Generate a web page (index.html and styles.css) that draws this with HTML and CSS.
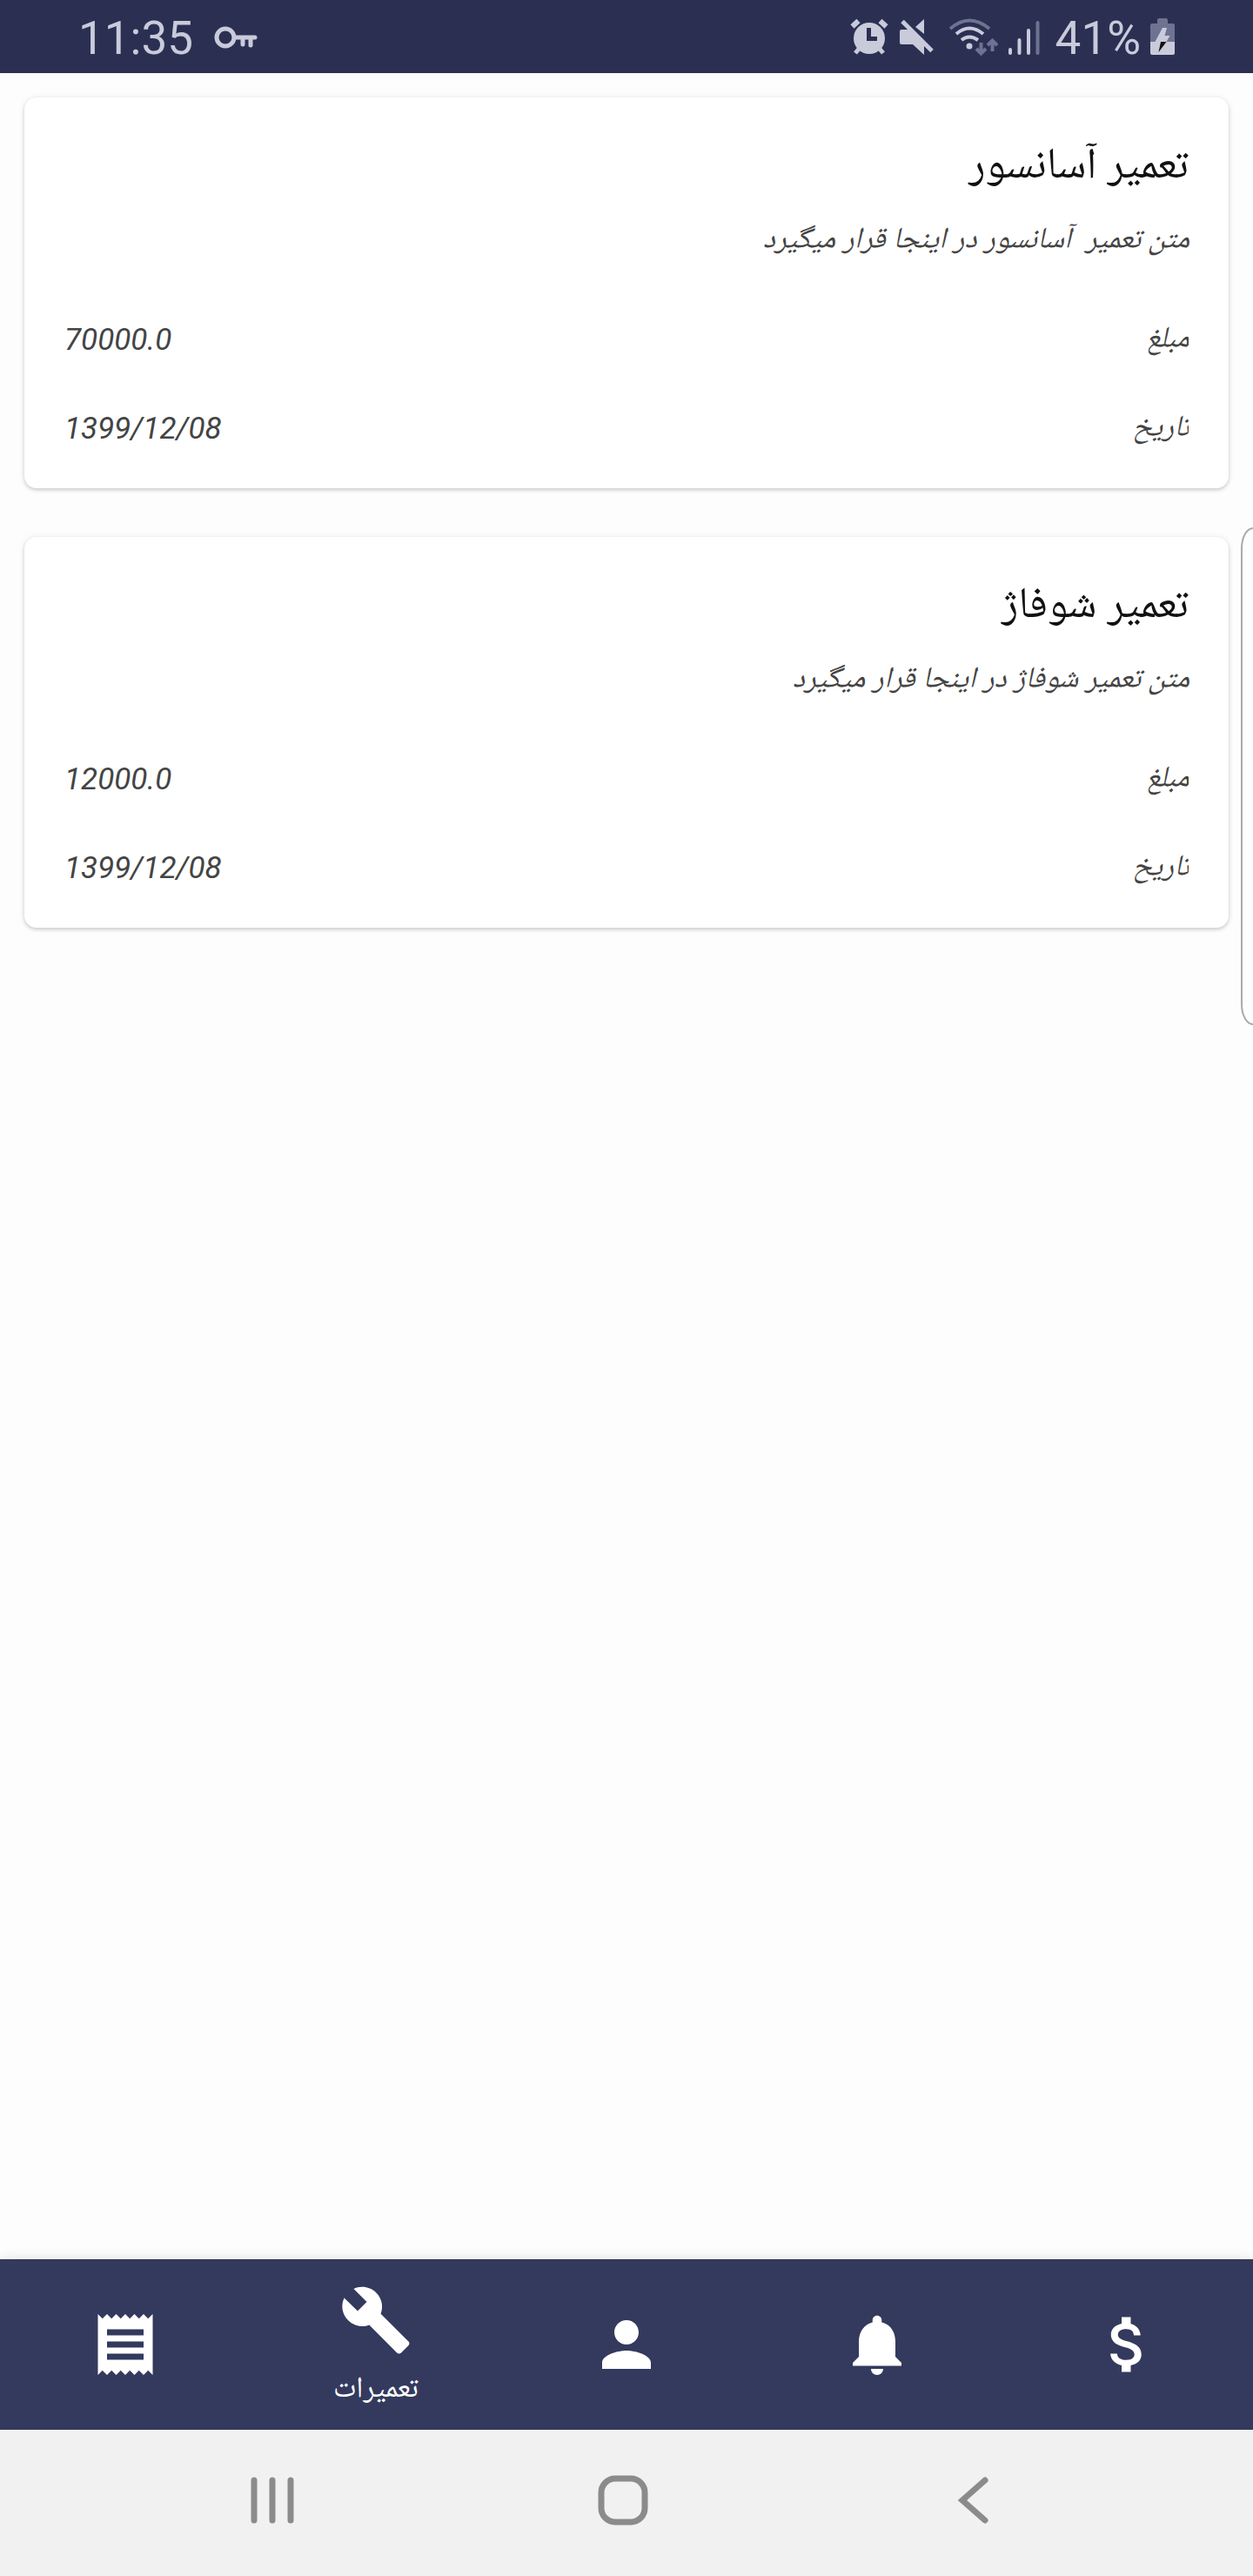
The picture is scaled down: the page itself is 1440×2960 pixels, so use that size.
FILE: index.html
```html
<!DOCTYPE html>
<html lang="fa" dir="rtl">
<head>
<meta charset="utf-8">
<meta name="viewport" content="width=device-width, initial-scale=1">
<title>تعمیرات</title>
<link rel="stylesheet" href="styles.css">
</head>
<body>
<header class="status" dir="ltr">
  <div class="status-group">
    <span class="status-text">11:35</span>
    <svg class="status-icon" width="50" height="84" viewBox="246 0 50 84" aria-hidden="true">
      <circle cx="259" cy="43" r="10" fill="none" stroke="#c9cbdb" stroke-width="5"/>
      <path d="M270 43h23M279 44v7M288 44v8" fill="none" stroke="#c9cbdb" stroke-width="5" stroke-linecap="round"/>
    </svg>
  </div>
  <div class="status-group status-end">
    <svg class="status-icon" width="46" height="84" viewBox="976 0 46 84" aria-hidden="true">
      <circle cx="999" cy="44" r="18"/>
      <path d="M979.500 30.500l7-6.500M1018.500 30.500l-7-6.500" fill="none" stroke="#c9cbdb" stroke-width="6"/>
      <path d="M983 61l5-6M1015 61l-5-6" fill="none" stroke="#c9cbdb" stroke-width="5"/>
      <path d="M998.500 32v12.500h9.500" fill="none" stroke="#2b3053" stroke-width="5"/>
    </svg>
    <svg class="status-icon" width="40" height="84" viewBox="1032 0 40 84" aria-hidden="true">
      <path d="M1035 34h8l18 18v11l-13-12h-13q-2 0-2-2v-13q0-2 2-2z"/>
      <path d="M1051 31l10-9v17z"/>
      <path d="M1036 24.500l34 34" fill="none" stroke="#c9cbdb" stroke-width="5"/>
    </svg>
    <svg class="status-icon wifi" width="58" height="84" viewBox="1088 0 58 84" aria-hidden="true">
      <circle cx="1113" cy="53" r="3.500"/>
      <path d="M1104 46q9-7 19 0M1098 39q15-13 31 0" fill="none" stroke="#c9cbdb" stroke-width="4"/>
      <path d="M1091 33q22-19 45 0" fill="none" stroke="#6f7392" stroke-width="4"/>
      <path d="M1126.500 49v12M1121 56l5.500 5.500 5.500-5.500M1139.500 59v-12M1134 52l5.500-5.500 5.500 5.500" fill="none" stroke="#6f7392" stroke-width="4"/>
    </svg>
    <svg class="status-icon" width="38" height="84" viewBox="1156 0 38 84" aria-hidden="true">
      <path d="M1159 57v4M1169.500 46v15M1180 35v26" fill="none" stroke="#c9cbdb" stroke-width="4" stroke-linecap="round"/>
      <path d="M1190.500 26v35" fill="none" stroke="#6f7392" stroke-width="4" stroke-linecap="round"/>
    </svg>
    <span class="status-text percent">41%</span>
    <svg class="status-icon" width="28" height="84" viewBox="1322 0 28 84" aria-hidden="true">
      <path d="M1330 27v-4q0-2 2-2h8q2 0 2 2v4h6q2 0 2 2v19h-28v-19q0-2 2-2z" fill="#6f7392"/>
      <path d="M1322 48h28v13q0 2-2 2h-24q-2 0-2-2z"/>
      <path d="M1336 32h5l-2.500 9h6l-4 7h-13z"/>
      <path d="M1334 48h6.500l-9 12z" fill="#111"/>
    </svg>
  </div>
</header>

<main class="content">
  <article class="card">
    <h2 class="card-title">تعمیر آسانسور</h2>
    <p class="card-text">متن تعمیر &nbsp;آسانسور در اینجا قرار میگیرد</p>
    <dl class="facts">
      <div class="fact"><dt>مبلغ</dt><dd>70000.0</dd></div>
      <div class="fact"><dt>تاریخ</dt><dd>1399/12/08</dd></div>
    </dl>
  </article>
  <article class="card">
    <h2 class="card-title">تعمیر شوفاژ</h2>
    <p class="card-text">متن تعمیر شوفاژ در اینجا قرار میگیرد</p>
    <dl class="facts">
      <div class="fact"><dt>مبلغ</dt><dd>12000.0</dd></div>
      <div class="fact"><dt>تاریخ</dt><dd>1399/12/08</dd></div>
    </dl>
  </article>
</main>

<div class="edge-handle"></div>

<nav class="tabs" dir="ltr">
  <button class="tab" type="button" aria-label="قبض‌ها">
    <svg width="84" height="84" viewBox="0 0 24 24" aria-hidden="true"><path d="M18 17H6v-2h12v2zm0-4H6v-2h12v2zm0-4H6V7h12v2zM3 22l1.500-1.500L6 22l1.500-1.500L9 22l1.500-1.500L12 22l1.500-1.500L15 22l1.500-1.500L18 22l1.500-1.500L21 22V2l-1.500 1.500L18 2l-1.500 1.500L15 2l-1.500 1.500L12 2l-1.500 1.500L9 2 7.500 3.500 6 2 4.500 3.500 3 2v20z"/></svg>
  </button>
  <button class="tab tab-active" type="button" aria-current="page">
    <svg width="84" height="84" viewBox="0 0 24 24" aria-hidden="true"><path d="M22.700 19l-9.100-9.100c.9-2.300.4-5-1.500-6.900-2-2-5-2.400-7.400-1.300L9 6 6 9 1.600 4.700C.4 7.100.9 10.100 2.900 12.100c1.900 1.900 4.600 2.400 6.900 1.500l9.100 9.100c.4.4 1 .4 1.400 0l2.300-2.300c.5-.4.5-1.100.1-1.400z"/></svg>
    <span class="tab-label">تعمیرات</span>
  </button>
  <button class="tab" type="button" aria-label="کاربر">
    <svg width="84" height="84" viewBox="0 0 24 24" aria-hidden="true"><path d="M12 12c2.210 0 4-1.790 4-4s-1.790-4-4-4-4 1.790-4 4 1.790 4 4 4zm0 2c-2.670 0-8 1.340-8 4v2h16v-2c0-2.660-5.330-4-8-4z"/></svg>
  </button>
  <button class="tab" type="button" aria-label="اعلان‌ها">
    <svg width="84" height="84" viewBox="0 0 24 24" aria-hidden="true"><path d="M12 22c1.100 0 2-.9 2-2h-4c0 1.100.89 2 2 2zm6-6v-5c0-3.070-1.640-5.640-4.500-6.320V4c0-.83-.67-1.500-1.500-1.500s-1.500.67-1.500 1.500v.68C7.630 5.360 6 7.920 6 11v5l-2 2v1h16v-1l-2-2z"/></svg>
  </button>
  <button class="tab" type="button" aria-label="پرداخت">
    <svg width="84" height="84" viewBox="0 0 24 24" aria-hidden="true"><path d="M11.800 10.900c-2.270-.59-3-1.200-3-2.150 0-1.090 1.010-1.850 2.700-1.850 1.780 0 2.440.85 2.500 2.100h2.210c-.07-1.720-1.120-3.300-3.210-3.810V3h-3v2.160c-1.940.42-3.500 1.680-3.500 3.610 0 2.310 1.910 3.460 4.700 4.130 2.500.6 3 1.480 3 2.410 0 .69-.49 1.790-2.700 1.790-2.060 0-2.870-.92-2.980-2.100h-2.200c.12 2.190 1.760 3.420 3.680 3.830V21h3v-2.150c1.950-.37 3.500-1.500 3.500-3.550 0-2.840-2.430-3.810-4.700-4.400z"/></svg>
  </button>
</nav>

<footer class="system" dir="ltr">
  <button class="system-key" type="button" aria-label="برنامه‌های اخیر">
    <svg width="60" height="60" viewBox="0 0 60 60" aria-hidden="true"><path d="M9 7v46M30 7v46M51 7v46"/></svg>
  </button>
  <button class="system-key" type="button" aria-label="خانه">
    <svg width="60" height="60" viewBox="0 0 60 60" aria-hidden="true"><rect x="5" y="5" width="50" height="50" rx="16"/></svg>
  </button>
  <button class="system-key" type="button" aria-label="بازگشت">
    <svg width="60" height="60" viewBox="0 0 60 60" aria-hidden="true"><path d="M43 7L17 30l26 23"/></svg>
  </button>
</footer>
</body>
</html>
```
FILE: styles.css
```css
* {
  box-sizing: border-box;
}

body {
  margin: 0;
  min-height: 100vh;
  display: flex;
  flex-direction: column;
  position: relative;
  background: #fdfdfd;
  color: #111;
  font-family: Roboto, "Noto Naskh Arabic UI", "Noto Naskh Arabic", "Noto Sans Arabic", "DejaVu Sans", sans-serif;
}

button {
  border: 0;
  margin: 0;
  padding: 0;
  background: none;
  font: inherit;
  color: inherit;
}

svg {
  display: block;
}

.status {
  display: flex;
  justify-content: space-between;
  height: 84px;
  padding: 0 90px;
  background: #2b3053;
  color: #c9cbdb;
}

.status-group {
  display: flex;
  align-items: flex-start;
  gap: 24px;
}

.status-end {
  gap: 11px;
}

.status-icon {
  fill: #c9cbdb;
}

.wifi {
  margin-left: 5px;
}

.status-text {
  font-size: 53px;
  line-height: 88px;
}

.percent {
  margin-left: 6px;
}

.content {
  flex: 1;
  display: flex;
  flex-direction: column;
  gap: 56px;
  padding: 28px;
}

.card {
  padding: 50px 46px 41px;
  border-radius: 14px;
  background: #fff;
  box-shadow: 0 2px 4px rgba(0, 0, 0, 0.18), 0 0 8px rgba(0, 0, 0, 0.06);
}

.card-title {
  margin: 0;
  font-size: 50px;
  font-weight: 400;
  line-height: 64px;
}

.card-text,
.fact {
  font-size: 34px;
  font-style: italic;
  line-height: 54px;
  color: #444;
}

.card-text {
  margin: 24px 0 0;
}

.facts {
  display: flex;
  flex-direction: column;
  gap: 48px;
  margin: 60px 0 0;
}

.fact {
  display: flex;
  justify-content: space-between;
}

.fact dt {
  overflow: hidden;
}

.fact dd {
  margin: 0;
  font-size: 35px;
}

.edge-handle {
  position: absolute;
  top: 606px;
  right: 0;
  width: 14px;
  height: 572px;
  border: 2px solid #aaa;
  border-right: 0;
  border-radius: 14px 0 0 14px / 24px 0 0 24px;
  background: #fdfdfd;
}

.tabs {
  display: flex;
  height: 196px;
  background: #333a5d;
  color: #fff;
  box-shadow: 0 0 14px rgba(0, 0, 0, 0.12);
}

.tab {
  flex: 1;
  display: flex;
  flex-direction: column;
  align-items: center;
  justify-content: center;
  gap: 12px;
  fill: #fff;
}

.tab-active {
  padding-top: 10px;
}

.tab-label {
  font-size: 34px;
  line-height: 54px;
}

.system {
  display: flex;
  justify-content: center;
  height: 168px;
  background: #f1f1f1;
  padding: 0 120px 6px 112px;
}

.system-key {
  flex: 1;
  display: flex;
  align-items: center;
  justify-content: center;
  fill: none;
  stroke: #8b8b8b;
  stroke-width: 7;
  stroke-linecap: round;
}
```
